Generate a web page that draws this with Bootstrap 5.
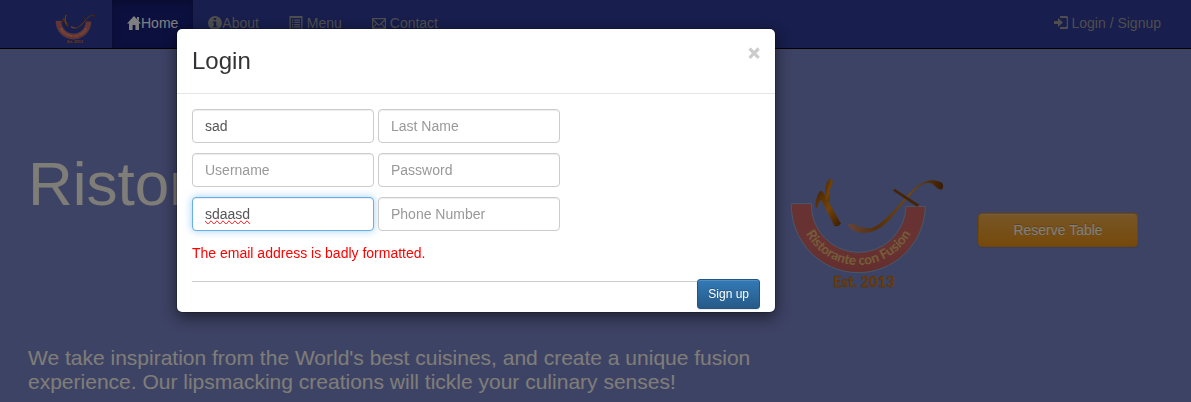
<!DOCTYPE html>
<html lang="en">
<head>
<meta charset="utf-8">
<meta name="viewport" content="width=device-width, initial-scale=1">
<title>Ristorante Con Fusion</title>
<link href="https://cdn.jsdelivr.net/npm/bootstrap@5.3.0/dist/css/bootstrap.min.css" rel="stylesheet">
<style>
body { font-family: "Liberation Sans", Arial, sans-serif; font-size: 14px; line-height: 20px; color: #333; background: #7b86cb; }
.site-nav { background: #303c9a; border-bottom: 1px solid #000; padding: 0 15px; }
.site-nav .navbar-brand { width: 72px; margin: 0 0 0 25px; padding: 13px 15px 4px; }
.site-nav .navbar-brand svg { width: 42px; height: 30px; display: block; }
.site-nav .navbar-nav .nav-link { padding: 13px 15px 15px; color: #9d9d9d; line-height: 20px; white-space: pre; display: flex; align-items: center; }
.site-nav .navbar-nav .nav-link.active { color: #fff; background: #18207e; box-shadow: inset 0 3px 9px rgba(0,0,0,.25); }
.site-nav .nav-link svg { width: 14px; height: 14px; fill: currentColor; flex: none; }
.hero { padding: 101px 38px 7px 13px; color: #fffaf0; }
.hero .row { --bs-gutter-x: 30px; margin: 0; }
.hero h1 { font-size: 62px; line-height: 68px; font-weight: 400; margin: 0 0 128px; white-space: nowrap; }
.hero p { font-size: 21px; line-height: 24px; margin: 0; }
.hero-logo { width: 100%; display: block; margin-top: 28px; }
.btn-reserve { --bs-btn-color: #fff; --bs-btn-hover-color: #fff; margin-top: 63px; padding: 6px 12px; font-size: 14px; line-height: 20px; border: 1px solid #e38d13; border-radius: 4px; background: linear-gradient(#f0ad4e, #eb9316); text-shadow: 0 -1px 0 rgba(0,0,0,.2); box-shadow: inset 0 1px 0 rgba(255,255,255,.15), 0 1px 1px rgba(0,0,0,.08); }
.login-dialog { max-width: 600px; margin: 28px 0 0 176px; }
.login-dialog .modal-content { border: 1px solid rgba(0,0,0,.2); border-radius: 6px; box-shadow: 0 5px 15px rgba(0,0,0,.5); color: #333; }
.login-dialog .modal-header { padding: 15px; border-bottom: 1px solid #e5e5e5; }
.login-dialog .modal-title { font-size: 24px; line-height: 34px; font-weight: 400; }
.close-x { border: 0; background: none; padding: 0; font-size: 20px; line-height: 18px; font-weight: 700; color: #000; opacity: .2; -webkit-text-stroke: 1px #000; }
.login-dialog .modal-body { padding: 15px 15px 3px; }
.signup-fields { display: grid; grid-template-columns: 182px 182px; gap: 10px 4px; }
.signup-fields .form-control { font-size: 14px; line-height: 20px; padding: 6px 12px; color: #555; border: 1px solid #ccc; border-radius: 4px; box-shadow: inset 0 1px 1px rgba(0,0,0,.075); }
.signup-fields .form-control::placeholder { color: #999; }
.signup-fields .form-control.is-current { border-color: #66afe9; box-shadow: inset 0 1px 1px rgba(0,0,0,.075), 0 0 8px rgba(102,175,233,.6); text-decoration: underline wavy red 1px; text-decoration: spelling-error; }
.form-message { color: #f00; margin: 12px 0 16px; }
.form-end hr { margin: 2px 0 0; border-top: 1px solid #ccc; opacity: 1; }
.btn-signup { --bs-btn-color: #fff; --bs-btn-hover-color: #fff; padding: 5px 10px; font-size: 12px; line-height: 18px; border: 1px solid #245580; border-radius: 3px; background: linear-gradient(#337ab7, #265a88); text-shadow: 0 -1px 0 rgba(0,0,0,.2); box-shadow: inset 0 1px 0 rgba(255,255,255,.15), 0 1px 1px rgba(0,0,0,.08); }
</style>
</head>
<body>
<svg class="position-absolute" width="0" height="0" aria-hidden="true">
  <defs>
    <linearGradient id="band" x1="0" y1="0" x2="0" y2="1"><stop offset="0" stop-color="#d06464"/><stop offset=".6" stop-color="#d46565"/><stop offset="1" stop-color="#c65c5c"/></linearGradient>
    <linearGradient id="tail" x1="0" y1="0" x2="1" y2="0"><stop offset="0" stop-color="#c88a76"/><stop offset=".3" stop-color="#a85f16"/><stop offset=".65" stop-color="#f0900f"/><stop offset="1" stop-color="#70390a"/></linearGradient>
    <linearGradient id="stem" x1="0" y1="0" x2="1" y2="1"><stop offset="0" stop-color="#8a4a0c"/><stop offset=".5" stop-color="#e8860c"/><stop offset="1" stop-color="#743b08"/></linearGradient>
  </defs>
  <symbol id="logo" viewBox="24 39 480 336">
    <path d="M34 116H94A142 142 0 0 0 378 124H436A201 203 0 0 1 34 116Z" fill="url(#band)" stroke="#8eb1cf" stroke-width="3"/>
    <path id="label-arc" d="M57 122A178 178 0 0 0 413 122" fill="none"/>
    <text font-family="Lato, sans-serif" font-weight="700" font-size="40" fill="#e8bd74" text-anchor="middle"><textPath href="#label-arc" startOffset="50%">Ristorante con Fusion</textPath></text>
    <path d="M107 130C105 113 108 98 118 80C123 75 130 80 134 90L183 176Q174 187 163 183L124 105Q117 106 112 128Z" fill="url(#stem)"/>
    <path d="M137 96C134 68 139 45 151 42Q160 42 158 53C150 70 145 84 149 106L143 112Z" fill="url(#stem)"/>
    <path d="M205 183C201 176 211 173 222 178C245 189 267 195 290 182C330 157 366 106 401 72C434 42 462 40 486 53Q494 67 484 74C466 75 463 46 435 55C406 65 373 112 331 162C296 200 262 208 235 202Q214 197 205 183Z" fill="url(#tail)"/>
    <path d="M344 71L418 119L411 125L339 77Z" fill="#8c480b"/>
    <text x="252" y="367" font-family="Lato, sans-serif" font-weight="900" font-size="44" fill="#d97e14" stroke="#9a5a16" stroke-width="1" text-anchor="middle">Est. 2013</text>
  </symbol>
</svg>

<nav class="site-nav navbar navbar-expand d-flex">
  <a class="navbar-brand" href="#" aria-label="Ristorante Con Fusion"><svg><use href="#logo"/></svg></a>
  <ul class="navbar-nav flex-grow-1">
    <li class="nav-item"><a class="nav-link active" href="#"><svg viewBox="0 0 14 14"><path d="M7 0L14 7.4H12V14H8.400V9H5.600V14H2V7.400H0L7 0ZM10 1H12V5L10 3Z"/></svg>Home</a></li>
    <li class="nav-item"><a class="nav-link" href="#"><svg viewBox="0 0 14 14"><path fill-rule="evenodd" d="M7 0A7 7 0 1 1 7 14A7 7 0 0 1 7 0ZM5.800 2V4H8.200V2ZM4.800 5.500V6.700H5.800V10H4.800V11.200H9.200V10H8.200V5.500Z"/></svg>About</a></li>
    <li class="nav-item"><a class="nav-link" href="#"><svg viewBox="0 0 14 14"><path fill-rule="evenodd" d="M.5 0H13.500V14H.5ZM1.800 2V12.800H12.200V2ZM3 3.500H4.300V4.700H3ZM5.300 3.500H11V4.700H5.300ZM3 5.700H4.300V6.900H3ZM5.300 5.700H11V6.900H5.300ZM3 8H4.300V9.200H3ZM5.300 8H11V9.200H5.300ZM3 10.200H4.300V11.400H3ZM5.300 10.200H11V11.400H5.300Z"/></svg> Menu</a></li>
    <li class="nav-item"><a class="nav-link" href="#"><svg viewBox="0 0 14 14"><path d="M.6 2.600H13.400V12.400H.6ZM.6 3.500L6 8.500Q7 9.300 8 8.500L13.400 3.500M.8 12L4.600 7.500M13.200 12L9.400 7.500" fill="none" stroke="currentColor" stroke-width="1.100"/></svg> Contact</a></li>
  </ul>
  <ul class="navbar-nav">
    <li class="nav-item"><a class="nav-link" href="#"><svg viewBox="0 0 14 14"><path d="M0 5H4V2L9 6.500L4 11V8H0ZM6 0H12Q15 0 15 3V10Q15 13 12 13H6V11H11.500Q12.800 11 12.800 9.700V3.300Q12.800 2 11.500 2H6Z"/></svg> Login / Signup</a></li>
  </ul>
</nav>

<header class="hero">
  <div class="row">
    <div class="col-8">
      <h1>Ristorante Con Fusion</h1>
      <p>We take inspiration from the World's best cuisines, and create a unique fusion experience. Our lipsmacking creations will tickle your culinary senses!</p>
    </div>
    <div class="col-2"><svg class="hero-logo" viewBox="0 0 160 112"><use href="#logo" width="160" height="112"/></svg></div>
    <div class="col-2"><button type="button" class="btn btn-reserve w-100">Reserve Table</button></div>
  </div>
</header>

<div class="modal-backdrop show"></div>
<div class="modal show d-block" role="dialog" aria-labelledby="login-title">
  <div class="login-dialog modal-dialog">
    <div class="modal-content">
      <div class="modal-header d-flex align-items-start justify-content-between">
        <h4 class="modal-title" id="login-title">Login</h4>
        <button type="button" class="close-x" aria-label="Close">×</button>
      </div>
      <form class="modal-body">
        <div class="signup-fields">
          <input class="form-control" type="text" aria-label="First Name" placeholder="First Name" value="sad">
          <input class="form-control" type="text" aria-label="Last Name" placeholder="Last Name">
          <input class="form-control" type="text" aria-label="Username" placeholder="Username">
          <input class="form-control" type="password" aria-label="Password" placeholder="Password">
          <input class="form-control is-current" type="text" aria-label="Email" placeholder="Email" value="sdaasd">
          <input class="form-control" type="tel" aria-label="Phone Number" placeholder="Phone Number">
        </div>
        <p class="form-message">The email address is badly formatted.</p>
        <div class="form-end d-flex align-items-start">
          <hr class="flex-grow-1">
          <button type="submit" class="btn btn-signup">Sign up</button>
        </div>
      </form>
    </div>
  </div>
</div>
<script src="https://cdn.jsdelivr.net/npm/bootstrap@5.3.0/dist/js/bootstrap.bundle.min.js"></script>
</body>
</html>
